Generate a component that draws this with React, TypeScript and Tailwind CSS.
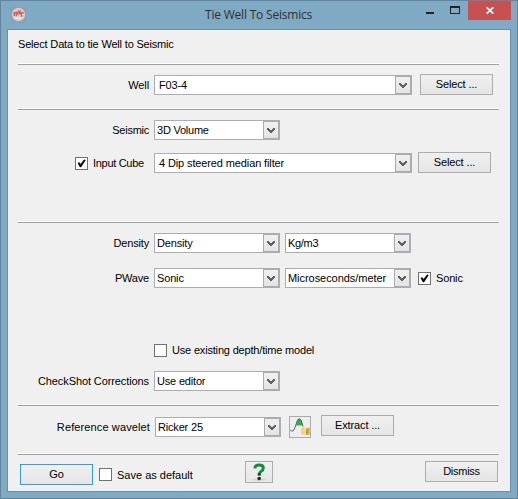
import type { ReactNode } from "react";

function Rule() {
  return (
    <div className="h-[2px] w-[482px] shrink-0">
      <div className="h-px bg-white" />
      <div className="h-px w-[481px] bg-[#a0a0a0]" />
    </div>
  );
}

function Row({ label, className, children }: { label?: ReactNode; className: string; children: ReactNode }) {
  return (
    <div className={"flex h-5 shrink-0 items-center " + className}>
      <div className="flex w-[131px] shrink-0 items-center justify-end">{label}</div>
      {children}
    </div>
  );
}

function Combo({ value, className }: { value: string; className: string }) {
  return (
    <div className={"flex h-5 shrink-0 items-stretch border border-[#abadb3] bg-white " + className}>
      <span className="flex-1 leading-[18px]">{value}</span>
      <span className="flex w-4 items-center justify-center border border-[#acacac] bg-linear-to-b from-[#f0f0f0] to-[#e4e4e4]">
        <svg width="8" height="7" viewBox="0 0 8 7" className="mt-px" shapeRendering="crispEdges">
          <path d="M0 1h2v1h1v1h2V2h1V1h2v2H7v1H6v1H5v1H3V5H2V4H1V3H0z" fill="#606060" />
        </svg>
      </span>
    </div>
  );
}

function Button({ className = "", children }: { className?: string; children: ReactNode }) {
  return (
    <button
      className={
        "flex h-[21px] w-[73px] shrink-0 items-center justify-center border bg-linear-to-b from-[#f0f0f0] to-[#e5e5e5] pb-px tracking-[-0.12px] " +
        className
      }
    >
      {children}
    </button>
  );
}

function Check({ checked = false }: { checked?: boolean }) {
  return (
    <span className="flex size-[13px] shrink-0 border border-[#707070] bg-white">
      {checked && (
        <svg width="11" height="11" viewBox="0 0 11 11">
          <path d="M2 5.2L3.3 4.5L4.5 6.4L8.2 1.8L9.3 2.3L5 8.9H4Z" fill="#000" stroke="#000" strokeWidth=".6" />
        </svg>
      )}
    </span>
  );
}

export default function App() {
  return (
    <div className="flex h-[499px] w-[518px] flex-col overflow-hidden border border-[#60859c] bg-[#80a9c3] font-['Liberation_Sans',Arial,sans-serif] text-[11px] leading-[14px] whitespace-nowrap text-black">
      <header className="flex h-7 shrink-0 items-start">
        <svg width="15" height="15" viewBox="0 0 15 15" className="mt-[6px] ml-[10px]">
          <rect width="15" height="15" rx="2" fill="#929da5" />
          <circle cx="7.5" cy="7.5" r="6.7" fill="#cfcfcf" />
          <path d="M2 10a6 4 0 0 0 11 0z" fill="#e4e4e4" />
          <path d="M2 6.5L5 5.5L7 5L9 5.5L13 6M4 5L7 7L11 6.5M4 6L3 9M6 7L5 9M10 7L11 10M7 4L10 4" fill="none" stroke="#e0484b" strokeWidth="1.1" />
        </svg>
        <h1 className="mt-[5px] ml-[179px] w-[108px] font-['Open_Sans','Noto_Sans',sans-serif] text-[12px] leading-[18px] tracking-[-0.2px] text-[#303030]">
          Tie Well To Seismics
        </h1>
        <div className="ml-[113px] flex">
          <span className="mt-[11px] h-[2px] w-2 bg-[#222]" />
          <span className="mt-[5px] ml-4 h-2 w-[10px] border border-t-2 border-[#222]" />
          <span className="ml-2 flex h-[19px] w-[43px] items-center justify-center bg-[#c75050]">
            <svg width="8" height="7" viewBox="0 0 8 7">
              <path d="M.7.3L7.3 6.7M7.3.3L.7 6.7" stroke="#fff" strokeWidth="1.7" />
            </svg>
          </span>
        </div>
      </header>

      <main className="ml-[6px] flex h-[463px] w-[504px] shrink-0 flex-col border border-[#6990a9] bg-[#f0f0f0] pl-[10px]">
        <div className="h-[33px] shrink-0 pt-[7px] tracking-[-0.18px]">Select Data to tie Well to Seismic</div>
        <Rule />

        <section className="flex h-[43px] shrink-0 items-start pt-[9px]">
          <Row label={<span className="tracking-[-0.1px]">Well</span>} className="mt-px">
            <Combo value="F03-4" className="ml-[5px] w-[258px] pl-1 tracking-[-0.15px]" />
          </Row>
          <Button className="ml-2 border-[#acacac]">Select ...</Button>
        </section>
        <Rule />

        <section className="h-[111px] shrink-0 pt-[10px]">
          <Row label={<span className="tracking-[-0.25px]">Seismic</span>} className="">
            <Combo value="3D Volume" className="ml-[5px] w-[126px] pl-[2px] tracking-[-0.23px]" />
          </Row>
          <div className="mt-3 flex items-start">
            <Row
              className="mt-px"
              label={
                <span className="flex w-[74px] items-center gap-[5px] tracking-[-0.3px]">
                  <Check checked />
                  Input Cube
                </span>
              }
            >
              <Combo value="4 Dip steered median filter" className="ml-[5px] w-[258px] pl-1 tracking-[-0.12px]" />
            </Row>
            <Button className="ml-[6px] border-[#acacac]">Select ...</Button>
          </div>
        </section>
        <Rule />

        <section className="h-[181px] shrink-0 pt-[10px]">
          <Row label={<span className="tracking-[-0.17px]">Density</span>} className="">
            <Combo value="Density" className="ml-[5px] w-[126px] pl-[2px] tracking-[-0.17px]" />
            <Combo value="Kg/m3" className="ml-[5px] w-[126px] pl-[2px] tracking-[-0.3px]" />
          </Row>
          <Row label={<span className="tracking-[-0.2px]">PWave</span>} className="mt-[15px]">
            <Combo value="Sonic" className="ml-[5px] w-[126px] pl-[2px] tracking-[-0.15px]" />
            <Combo value="Microseconds/meter" className="ml-[5px] w-[126px] pl-[2px] tracking-[-0.05px]" />
            <span className="ml-[7px] flex items-center gap-[5px] tracking-[-0.15px]">
              <Check checked />
              Sonic
            </span>
          </Row>
          <Row className="mt-[52px]">
            <span className="ml-[5px] flex items-center gap-[5px] tracking-[-0.18px]">
              <Check />
              Use existing depth/time model
            </span>
          </Row>
          <Row label={<span className="tracking-[-0.1px]">CheckShot Corrections</span>} className="mt-[11px]">
            <Combo value="Use editor" className="ml-[5px] w-[126px] pl-[2px] tracking-[-0.18px]" />
          </Row>
        </section>
        <Rule />

        <section className="flex h-[47px] shrink-0 items-start pt-[9px]">
          <Row label={<span className="-mr-px tracking-[0.12px]">Reference wavelet</span>} className="mt-[2px]">
            <Combo value="Ricker 25" className="ml-[6px] w-[126px] pl-[2px] tracking-[-0.18px]" />
          </Row>
          <button className="mt-px ml-2 size-[22px] border border-[#acacac] bg-[#eeeeee]">
            <svg width="20" height="20" viewBox="0 0 20 20">
              <path d="M6 8.5L7.5 3Q9.3 .5 11 3L12.8 8.5Z" fill="#2fb344" />
              <path d="M0 12.5Q1.5 15.5 3.5 13.5L5 10.5L7.5 3Q9.3 .5 11 3L13 9.5" fill="none" stroke="#53675a" strokeWidth="1" />
              <path d="M11.5 11L13.5 10v8l-2-1z" fill="#f0ca72" />
              <path d="M13 10.5h6.5v7.5h-6.5z" fill="#f8d884" />
              <path d="M16.5 12.5l1.2-1.5v6l-1.2 1z" fill="#8c6420" />
              <path d="M17.7 11l1.8-.5v7l-1.8.5z" fill="#dba947" />
            </svg>
          </button>
          <Button className="ml-[10px] border-[#acacac]">Extract ...</Button>
        </section>
        <Rule />

        <footer className="flex h-9 shrink-0 items-start">
          <Button className="mt-[9px] ml-[2px] border-[#3399ff]">Go</Button>
          <span className="mt-[13px] ml-[6px] flex h-[13px] items-center gap-[5px]">
            <Check />
            <span className="w-[81px]">Save as default</span>
          </span>
          <button className="mt-[6px] ml-[47px] h-[22px] w-7 border border-[#acacac] bg-linear-to-b from-[#f0f0f0] to-[#e7e7e7]">
            <svg width="26" height="20" viewBox="0 0 26 20">
              <ellipse cx="13" cy="17.7" rx="7" ry="1.2" fill="#d3d7d3" />
              <path d="M8.8 6.4Q9 3 13 3Q17.4 3 17.4 6Q17.4 8 15.2 9.2Q13.2 10.3 13.2 12.8" fill="none" stroke="#168c43" strokeWidth="2.9" />
              <path d="M13.2 11v2.7" stroke="#124f2b" strokeWidth="3" />
              <circle cx="13.2" cy="16.5" r="1.8" fill="#182c20" />
            </svg>
          </button>
          <Button className="mt-[6px] ml-[152px] border-[#acacac] tracking-[-0.25px]">Dismiss</Button>
        </footer>
      </main>
    </div>
  );
}
